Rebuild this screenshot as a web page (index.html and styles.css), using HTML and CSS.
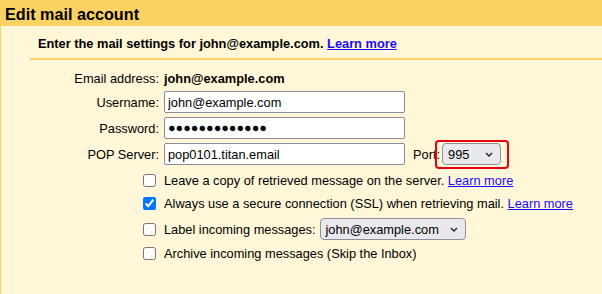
FILE: index.html
```html
<!DOCTYPE html>
<html lang="en">
<head>
<meta charset="utf-8">
<title>Edit mail account</title>
<link rel="stylesheet" href="styles.css">
</head>
<body>
<div class="dialog">
  <h1 class="title">Edit mail account</h1>
  <div class="content">
    <div class="intro">Enter the mail settings for john@example.com. <a href="#">Learn more</a></div>
    <div class="form">
      <span class="label static">Email address:</span>
      <span class="value static">john@example.com</span>

      <label class="label" for="user">Username:</label>
      <input class="field" id="user" type="text" value="john@example.com">

      <label class="label" for="pass">Password:</label>
      <input class="field secret" id="pass" type="text" value="●●●●●●●●●●●●●" readonly>

      <label class="label" for="pop">POP Server:</label>
      <div class="pop-line">
        <input class="field" id="pop" type="text" value="pop0101.titan.email">
        <span class="port-label">Port:</span>
        <span class="highlight">
          <span class="select port-select"><span>995</span><svg class="chev" width="8" height="5" viewBox="0 0 8 5"><path d="M1 1 L4 4 L7 1" fill="none" stroke="#222" stroke-width="1.4"/></svg></span>
        </span>
      </div>
    </div>
    <div class="options">
      <label class="opt"><input type="checkbox"><span>Leave a copy of retrieved message on the server. <a href="#">Learn more</a></span></label>
      <label class="opt"><input type="checkbox" checked><span>Always use a secure connection (SSL) when retrieving mail. <a href="#">Learn more</a></span></label>
      <label class="opt opt-tall"><input type="checkbox"><span>Label incoming messages:</span><span class="select label-select"><span>john@example.com</span><svg class="chev" width="8" height="5" viewBox="0 0 8 5"><path d="M1 1 L4 4 L7 1" fill="none" stroke="#222" stroke-width="1.4"/></svg></span></label>
      <label class="opt"><input type="checkbox"><span>Archive incoming messages (Skip the Inbox)</span></label>
    </div>
  </div>
</div>
</body>
</html>
```
FILE: styles.css
```css
html, body {
  margin: 0;
  padding: 0;
}
body {
  background: #fff7d7;
  font-family: "Liberation Sans", Arial, sans-serif;
  font-size: 12.8px;
  color: #000;
}
.dialog {
  border-left: 1px solid #fad163;
  min-height: 294px;
  box-sizing: border-box;
}
.title {
  margin: 0;
  background: #fad163;
  height: 26px;
  box-sizing: border-box;
  padding: 4px 0 0 4px;
  font-size: 16.2px;
  line-height: 20px;
  font-weight: bold;
}
.intro {
  margin-left: 29px;
  padding: 10px 0 6px 8px;
  line-height: 16px;
  font-weight: bold;
  border-bottom: 2px solid #fad163;
}
a {
  color: #1a0dff;
  text-decoration: underline;
}
.form {
  display: grid;
  grid-template-columns: 158px auto;
  grid-template-rows: 19px 22px 22px 22px;
  column-gap: 5px;
  row-gap: 4px;
  padding-top: 8px;
  align-items: center;
}
.label {
  text-align: right;
  white-space: nowrap;
}
.static {
  align-self: end;
  line-height: 16px;
}
.value {
  font-weight: bold;
}
.field {
  width: 241px;
  height: 22px;
  box-sizing: border-box;
  margin: 0;
  padding: 0 3px;
  border: 1px solid #8a8a96;
  border-radius: 2px;
  background: #fff;
  font-family: "Liberation Sans", Arial, sans-serif;
  font-size: 12.8px;
  color: #000;
  outline: none;
}
.secret {
  font-size: 12.6px;
  letter-spacing: 0;
}
.pop-line {
  display: flex;
  align-items: center;
}
.port-label {
  margin-left: 8px;
  margin-right: 2px;
}
.highlight {
  position: relative;
  display: inline-flex;
}
.highlight::after {
  content: "";
  position: absolute;
  left: -7px;
  right: -8px;
  top: -3px;
  bottom: -4px;
  border: 2px solid #e8000d;
  border-radius: 4px;
}
.select {
  display: inline-flex;
  align-items: center;
  justify-content: space-between;
  height: 22px;
  box-sizing: border-box;
  padding: 0 7px 0 5px;
  border: 1px solid #8f8f9d;
  border-radius: 4px;
  background: #e9e9ed;
  color: #000;
}
.port-select {
  width: 59px;
}
.label-select {
  width: 146px;
  margin-left: 4px;
}
.chev {
  display: block;
  flex: none;
}
.options {
  margin-top: 6px;
  padding-left: 142px;
  display: flex;
  flex-direction: column;
  gap: 4px;
}
.opt {
  display: flex;
  align-items: center;
  height: 19px;
  white-space: nowrap;
}
.opt-tall {
  height: 22px;
  margin-top: 1px;
}
.opt input {
  margin: 0 8px 0 0;
  width: 13px;
  height: 13px;
  flex: none;
}
```
